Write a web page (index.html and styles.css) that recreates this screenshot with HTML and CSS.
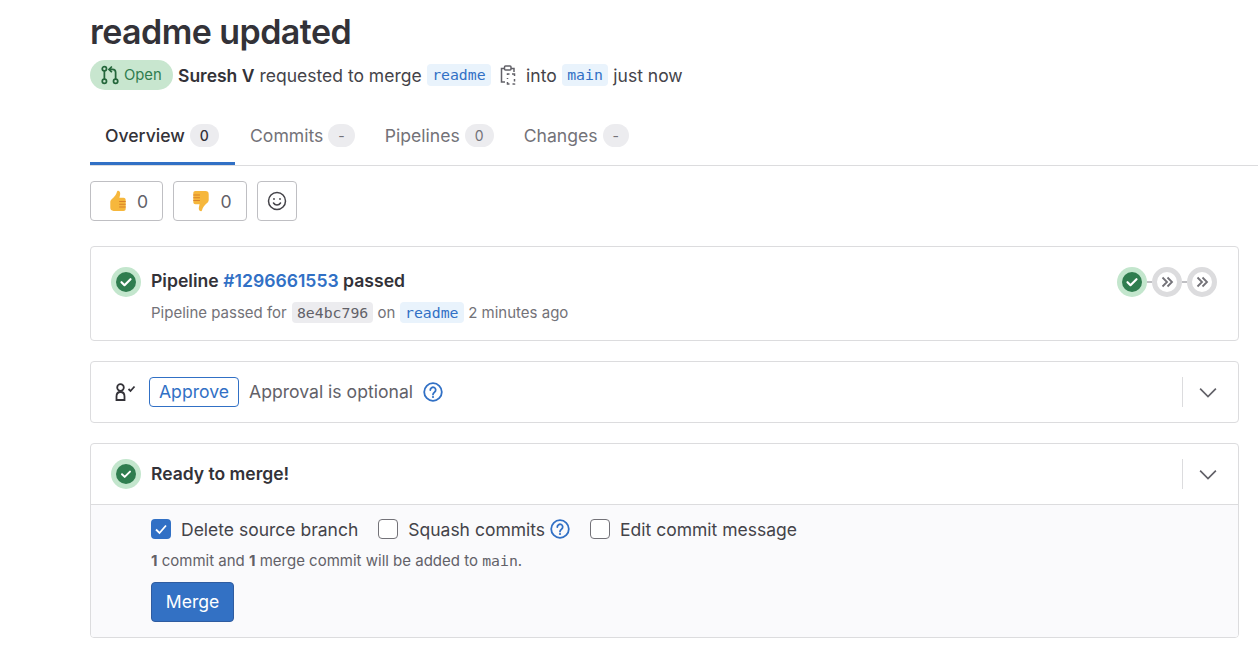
FILE: index.html
```
<!DOCTYPE html>
<html lang="en">
<head>
<meta charset="utf-8">
<title>readme updated</title>
<link rel="stylesheet" href="styles.css">
</head>
<body>
<main class="page">
  <h1 class="title">readme updated</h1>
  <div class="meta">
    <span class="badge">
      <svg class="badge-icon" viewBox="0 0 16 16" width="20" height="20" fill="none" stroke="#24663b" stroke-width="1.400"><circle cx="3.500" cy="3" r="1.700"/><circle cx="3.500" cy="13" r="1.700"/><circle cx="12.500" cy="13" r="1.700"/><path d="M3.500 4.700v6.600M12.500 11.300V6a2.500 2.500 0 0 0-2.500-2.500H7.500M9.500 1.200 7.200 3.500l2.300 2.300"/></svg>
      Open
    </span>
    <strong class="author">Suresh V</strong>
    <span>requested to merge</span>
    <code class="ref">readme</code>
    <svg class="copy" viewBox="0 0 16 20" width="16" height="20" fill="none" stroke="#626168" stroke-width="1.500"><path d="M4.500 3.500H1.500v13.500h3.500M11 3.500h3v3.500"/><rect x="4.500" y="1" width="6.500" height="4" rx="1"/><path d="M7.500 10V9h2M12 9h2.500v2M14.500 14v2.500M14.500 18.500v.5h-2M9.500 19h-2v-2M7.500 14v-1"/></svg>
    <span class="into">into</span>
    <code class="ref">main</code>
    <span>just now</span>
  </div>
  <nav class="tabs">
    <a class="tab tab-active">Overview <span class="count">0</span></a>
    <a class="tab">Commits <span class="count">-</span></a>
    <a class="tab">Pipelines <span class="count">0</span></a>
    <a class="tab">Changes <span class="count">-</span></a>
  </nav>
  <div class="reactions">
    <button class="react react-up">
      <svg viewBox="0 0 20 20" width="22" height="22"><path fill="#f6b73c" d="M6 19c-2 0-3-1-3-3v-5c0-1 .5-2 1.500-2.800C7 6 8.500 4 9 1.800c.2-1 1-1.300 1.700-1 1.200.5 1.500 2 1.200 3.500L11.300 7H15c1.500 0 2 1 2 2.500V17c0 1.300-.8 2-2 2z"/><path stroke="#d9822b" stroke-width="1" d="M11 10.500h6M11 13h6M11 15.500h6" fill="none"/></svg>
      <span>0</span>
    </button>
    <button class="react react-down">
      <svg viewBox="0 0 20 20" width="22" height="22"><path fill="#f6b73c" d="M14 1c2 0 3 1 3 3v5c0 1-.5 2-1.500 2.800C13 14 11.500 16 11 18.200c-.2 1-1 1.300-1.700 1-1.200-.5-1.500-2-1.200-3.500L8.700 13H5c-1.500 0-2-1-2-2.500V3c0-1.300.8-2 2-2z"/><path stroke="#d9822b" stroke-width="1" d="M3 4.500h6M3 7h6M3 9.500h6" fill="none"/></svg>
      <span>0</span>
    </button>
    <button class="react react-add">
      <svg viewBox="0 0 20 20" width="20" height="20" fill="none" stroke="#444349" stroke-width="1.500"><circle cx="10" cy="10" r="8.500"/><path d="M6.500 12c.8 1.300 2 2 3.500 2s2.700-.7 3.500-2" stroke-linecap="round"/><circle cx="7" cy="8" r=".9" fill="#444349" stroke="none"/><circle cx="13" cy="8" r=".9" fill="#444349" stroke="none"/></svg>
    </button>
  </div>

  <section class="card card-pipeline">
    <svg class="status" viewBox="0 0 30 30" width="30" height="30"><circle cx="15" cy="15" r="15" fill="#c3e6cd"/><circle cx="15" cy="15" r="10" fill="#2f7d4f"/><path d="M10.500 15.200l3 3 6-6" fill="none" stroke="#fff" stroke-width="2.200" stroke-linecap="round" stroke-linejoin="round"/></svg>
    <div class="pipeline-text">
      <div class="pipeline-title">Pipeline <a class="link">#1296661553</a> passed</div>
      <div class="pipeline-sub">Pipeline passed for <code class="sha">8e4bc796</code> on <code class="ref ref-small">readme</code> 2 minutes ago</div>
    </div>
    <div class="stages">
      <svg viewBox="0 0 30 30" width="30" height="30"><circle cx="15" cy="15" r="15" fill="#c3e6cd"/><circle cx="15" cy="15" r="10" fill="#2f7d4f"/><path d="M10.500 15.200l3 3 6-6" fill="none" stroke="#fff" stroke-width="2.200" stroke-linecap="round" stroke-linejoin="round"/></svg>
      <span class="connector"></span>
      <svg viewBox="0 0 30 30" width="30" height="30"><circle cx="15" cy="15" r="12.500" fill="#fff" stroke="#dcdcde" stroke-width="5"/><path d="M10.500 10.500 15 15l-4.500 4.500M15.500 10.500 20 15l-4.500 4.500" fill="none" stroke="#737278" stroke-width="1.800"/></svg>
      <span class="connector"></span>
      <svg viewBox="0 0 30 30" width="30" height="30"><circle cx="15" cy="15" r="12.500" fill="#fff" stroke="#dcdcde" stroke-width="5"/><path d="M10.500 10.500 15 15l-4.500 4.500M15.500 10.500 20 15l-4.500 4.500" fill="none" stroke="#737278" stroke-width="1.800"/></svg>
    </div>
  </section>

  <section class="card card-approve">
    <svg class="approve-icon" viewBox="0 0 22 18" width="22" height="18" fill="none" stroke="#333238" stroke-width="1.800"><circle cx="5.500" cy="4.500" r="3.300"/><path d="M1.500 17v-3.500C1.500 11 3 9 5.500 9s4 2 4 4.500V17z"/><path d="M13.500 6l2 2 4-4.500"/></svg>
    <button class="approve-btn">Approve</button>
    <span class="approve-text">Approval is optional</span>
    <svg class="help" viewBox="0 0 20 20" width="20" height="20" fill="none" stroke="#3170c5" stroke-width="1.800"><circle cx="10" cy="10" r="8.800"/><path d="M7.300 8a2.700 2.700 0 1 1 4.200 2.200c-1 .7-1.500 1.100-1.500 2.300" stroke-linecap="round"/><circle cx="10" cy="15" r="1.100" fill="#3170c5" stroke="none"/></svg>
    <div class="toggle">
      <svg viewBox="0 0 16 16" width="18" height="18" fill="none" stroke="#626168" stroke-width="1.500"><path d="M1 5l7 7 7-7"/></svg>
    </div>
  </section>

  <section class="card card-merge">
    <header class="merge-head">
      <svg class="status" viewBox="0 0 30 30" width="30" height="30"><circle cx="15" cy="15" r="15" fill="#c3e6cd"/><circle cx="15" cy="15" r="10" fill="#2f7d4f"/><path d="M11 15.200l2.700 2.700 5.300-5.300" fill="none" stroke="#fff" stroke-width="2" stroke-linecap="round" stroke-linejoin="round"/></svg>
      <strong class="merge-title">Ready to merge!</strong>
      <div class="toggle">
        <svg viewBox="0 0 16 16" width="18" height="18" fill="none" stroke="#626168" stroke-width="1.500"><path d="M1 5l7 7 7-7"/></svg>
      </div>
    </header>
    <div class="merge-body">
      <div class="options">
        <label class="option">
          <span class="box box-on"><svg viewBox="0 0 20 20" width="20" height="20" fill="none" stroke="#fff" stroke-width="1.800"><path d="M5 10.500l3.500 3.500 6.500-7.500"/></svg></span>
          Delete source branch
        </label>
        <label class="option">
          <span class="box"></span>
          Squash commits
          <svg class="help-small" viewBox="0 0 20 20" width="20" height="20" fill="none" stroke="#3170c5" stroke-width="1.800"><circle cx="10" cy="10" r="8.800"/><path d="M7.300 8a2.700 2.700 0 1 1 4.200 2.200c-1 .7-1.500 1.100-1.500 2.300" stroke-linecap="round"/><circle cx="10" cy="15" r="1.100" fill="#3170c5" stroke="none"/></svg>
        </label>
        <label class="option">
          <span class="box"></span>
          Edit commit message
        </label>
      </div>
      <p class="note"><b>1</b> commit and <b>1</b> merge commit will be added to <code class="plain">main</code>.</p>
      <button class="merge-btn">Merge</button>
    </div>
  </section>
</main>
</body>
</html>
```
FILE: styles.css
```
* { box-sizing: border-box; }
html, body { margin: 0; padding: 0; overflow: hidden; }
body { background: #fff; color: #333238; font-family: Inter, "Noto Sans", sans-serif; font-size: 17.600px; }
.page { padding: 0 19px 0 90px; height: 648px; }
.title { margin: 0; padding-top: 11px; height: 60px; font-size: 34px; line-height: 42px; font-weight: 600; letter-spacing: -.56px; color: #333238; }
.meta { display: flex; align-items: center; height: 30px; color: #444349; font-size: 17.500px; white-space: nowrap; gap: 5px; }
.badge { display: flex; align-items: center; gap: 4px; height: 30px; width: 83px; padding-left: 10px; border-radius: 15px; background: #c8e6cf; color: #2f7d4f; font-size: 14.800px; }
.author { font-weight: 600; color: #333238; }
.ref { font-family: "DejaVu Sans Mono", monospace; font-size: 14.800px; line-height: 22px; color: #3170c5; background: #e9f3fc; padding: 0 5.500px; border-radius: 4px; }
.copy { margin: 0 5px 0 4px; }
.tabs { display: flex; align-items: flex-start; height: 76px; margin: 0 -19px 0 0; padding-top: 20px; border-bottom: 1px solid #dcdcde; }
.tab { display: flex; align-items: center; gap: 5px; height: 55px; padding: 0 15px 2px; border-bottom: 3px solid transparent; color: #737278; white-space: nowrap; }
.tab-active { color: #333238; font-weight: 500; border-bottom-color: #3170c5; width: 145px; }
.count { display: inline-flex; align-items: center; justify-content: center; height: 23px; padding: 0 10px; border-radius: 12px; background: #ececef; color: #737278; font-size: 14px; font-weight: 400; }
.tab-active .count { color: #333238; font-weight: 500; }
.reactions { display: flex; gap: 10px; margin-top: 15px; height: 40px; }
.react { display: flex; align-items: center; justify-content: center; gap: 8px; height: 40px; background: #fff; border: 1px solid #bfbfc3; border-radius: 4px; color: #626168; font: inherit; padding: 0 0 0 2px; }
.react-up { width: 73px; }
.react-down { width: 74px; }
.react-add { width: 40px; padding: 0; }
.card { position: relative; border: 1px solid #dcdcde; border-radius: 4px; background: #fff; display: flex; align-items: center; }
.card-pipeline { height: 95px; margin-top: 25px; padding: 20px 21px 0 20px; align-items: flex-start; }
.status { flex: none; }
.pipeline-text { margin-left: 10px; flex: 1; }
.pipeline-title { font-weight: 600; line-height: 28px; color: #333238; }
.link { color: #3170c5; font-weight: 600; }
.pipeline-sub { margin-top: 6px; font-size: 15px; line-height: 24px; color: #737278; }
.sha { font-family: "DejaVu Sans Mono", monospace; font-size: 14.800px; background: #ececef; color: #626168; padding: 2px 5px; margin-left: 1px; border-radius: 4px; }
.ref-small { padding: 2px 5.500px; line-height: 20px; }
.stages { display: flex; align-items: center; }
.connector { width: 5px; height: 2px; background: #bfbfc3; }
.card-approve { height: 62px; margin-top: 20px; padding-left: 24px; }
.approve-icon { flex: none; margin-right: 12px; }
.approve-btn { height: 30px; width: 90px; padding: 0 0 2px; background: #fff; border: 1px solid #3170c5; border-radius: 4px; color: #3170c5; font: inherit; }
.approve-text { margin-left: 10px; padding-bottom: 2px; color: #626168; }
.help { margin-left: 10px; }
.toggle { display: flex; align-items: center; justify-content: center; margin-left: auto; margin-right: 7px; width: 49px; height: 30px; border-left: 1px solid #dcdcde; padding-left: 2px; }
.card-merge { display: block; height: 195px; margin-top: 20px; overflow: hidden; }
.merge-head { display: flex; align-items: center; height: 61px; padding-left: 20px; border-bottom: 1px solid #dcdcde; }
.merge-title { margin-left: 10px; padding-bottom: 2px; font-weight: 600; font-size: 17.500px; }
.merge-body { height: 133px; background: #fafafc; padding: 11px 0 0 60px; }
.options { display: flex; gap: 20px; height: 26px; align-items: center; font-size: 17.500px; }
.option { display: flex; align-items: center; gap: 10px; color: #444349; white-space: nowrap; }
.box { display: block; width: 20px; height: 20px; border: 1px solid #737278; border-radius: 4px; background: #fff; }
.box-on { border: 0; background: #3170c5; }
.help-small { margin-left: -5px; }
.note { margin: 7px 0 0; font-size: 15px; line-height: 24px; color: #626168; }
.plain { font-family: "DejaVu Sans Mono", monospace; font-size: 14.800px; }
.merge-btn { display: block; margin-top: 9px; width: 83px; height: 40px; border: 1px solid #2f5ca0; border-radius: 4px; background: #3371c4; color: #fff; font: inherit; padding: 0 0 2px; }
```
